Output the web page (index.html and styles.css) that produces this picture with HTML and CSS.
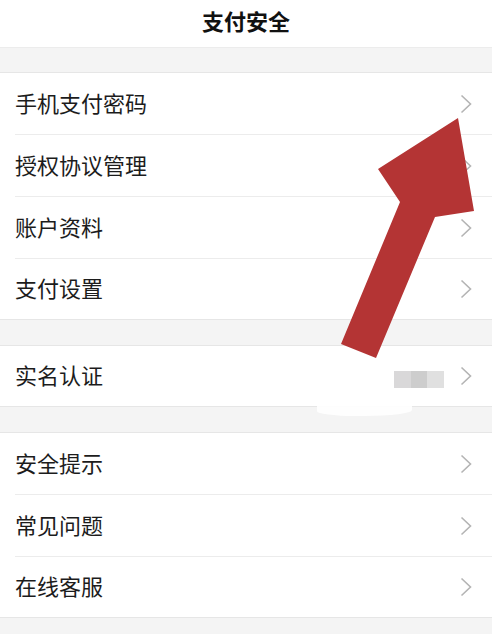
FILE: index.html
```html
<!DOCTYPE html>
<html lang="zh">
<head>
<meta charset="utf-8">
<title>支付安全</title>
<link rel="stylesheet" href="styles.css">
</head>
<body>
<div class="page">
  <header class="header"><h1 class="title">支付安全</h1></header>

  <section class="group first">
    <div class="row"><div class="row-in"><span class="label">手机支付密码</span><svg class="chev" viewBox="0 0 12 20"><path d="M1.5 1.5 L10.5 10 L1.5 18.5"/></svg></div></div>
    <div class="row"><div class="row-in"><span class="label">授权协议管理</span><svg class="chev" viewBox="0 0 12 20"><path d="M1.5 1.5 L10.5 10 L1.5 18.5"/></svg></div></div>
    <div class="row"><div class="row-in"><span class="label">账户资料</span><svg class="chev" viewBox="0 0 12 20"><path d="M1.5 1.5 L10.5 10 L1.5 18.5"/></svg></div></div>
    <div class="row"><div class="row-in"><span class="label">支付设置</span><svg class="chev" viewBox="0 0 12 20"><path d="M1.5 1.5 L10.5 10 L1.5 18.5"/></svg></div></div>
  </section>

  <section class="group">
    <div class="row"><div class="row-in"><span class="label">实名认证</span><span class="masked"><i class="m1"></i><i class="m2"></i><i class="m3"></i></span><svg class="chev" viewBox="0 0 12 20"><path d="M1.5 1.5 L10.5 10 L1.5 18.5"/></svg></div></div>
  </section>

  <section class="group">
    <div class="row"><div class="row-in"><span class="label">安全提示</span><svg class="chev" viewBox="0 0 12 20"><path d="M1.5 1.5 L10.5 10 L1.5 18.5"/></svg></div></div>
    <div class="row"><div class="row-in"><span class="label">常见问题</span><svg class="chev" viewBox="0 0 12 20"><path d="M1.5 1.5 L10.5 10 L1.5 18.5"/></svg></div></div>
    <div class="row"><div class="row-in"><span class="label">在线客服</span><svg class="chev" viewBox="0 0 12 20"><path d="M1.5 1.5 L10.5 10 L1.5 18.5"/></svg></div></div>
  </section>

  <div class="smudge"></div>
  <svg class="arrow" viewBox="0 0 492 634" width="492" height="634">
    <polygon points="458,118 474,211 435,217 376,358 341,344 400,202 378,169"/>
  </svg>
</div>
</body>
</html>
```

FILE: styles.css
```css
html, body {
  margin: 0;
  padding: 0;
  background: #f4f4f4;
}
.page {
  position: relative;
  width: 492px;
  height: 634px;
  overflow: hidden;
  font-family: "Noto Sans CJK SC", "Noto Sans", sans-serif;
  color: #1c1c1c;
}
.header {
  height: 48px;
  box-sizing: border-box;
  padding-bottom: 8px;
  background: #fff;
  border-bottom: 1px solid #ececec;
  display: flex;
  align-items: center;
  justify-content: center;
}
.title {
  margin: 0;
  font-size: 22px;
  font-weight: 700;
  line-height: 1;
  color: #111;
}
.group {
  background: #fff;
  border-top: 1px solid #e6e6e6;
  border-bottom: 1px solid #e6e6e6;
  margin-top: 25px;
}
.group.first {
  margin-top: 24px;
}
.row {
  padding-left: 15px;
}
.row-in {
  height: 61px;
  display: flex;
  align-items: center;
  padding-right: 20px;
  border-top: 1px solid #ececec;
}
.row:first-child .row-in {
  border-top: none;
}
.row:last-child .row-in {
  height: 60px;
}
.label {
  flex: 1;
  font-size: 22px;
  line-height: 1;
  padding-bottom: 4px;
  letter-spacing: 0;
}
.chev {
  width: 12px;
  height: 20px;
  display: block;
}
.chev path {
  fill: none;
  stroke: #b4b4b4;
  stroke-width: 1.6;
}
.masked {
  display: flex;
  height: 17px;
  margin-right: 16px;
  margin-top: 6px;
}
.masked i {
  display: block;
  height: 17px;
}
.m1 { width: 17px; background: #d9d8d9; }
.m2 { width: 16px; background: #cdcdcd; }
.m3 { width: 17px; background: #e0e0e0; }
.smudge {
  position: absolute;
  left: 317px;
  top: 404px;
  width: 95px;
  height: 12px;
  background: #fff;
  border-radius: 0 0 50% 40%;
  opacity: 0.9;
}
.arrow {
  position: absolute;
  left: 0;
  top: 0;
}
.arrow polygon {
  fill: #b43434;
}
```
